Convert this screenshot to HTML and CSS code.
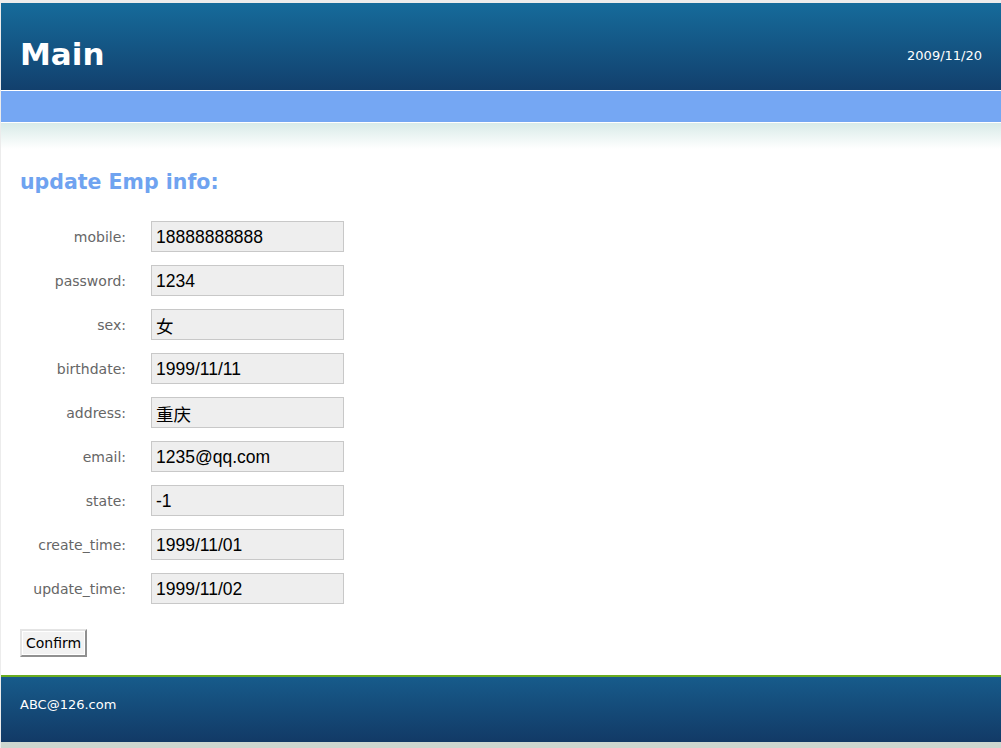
FILE: index.html
```html
<!DOCTYPE html>
<html>
<head>
<meta charset="utf-8">
<title>Main</title>
<link rel="stylesheet" href="styles.css">
</head>
<body>
<div class="page">
  <div class="header">
    <h1 class="logo">Main</h1>
    <div class="date">2009/11/20</div>
  </div>
  <div class="navbar"></div>
  <div class="fade"></div>
  <div class="content">
    <h2 class="title">update Emp info:</h2>
    <form class="form">
      <div class="row"><label class="label">mobile:</label><input class="field" type="text" value="18888888888"></div>
      <div class="row"><label class="label">password:</label><input class="field" type="text" value="1234"></div>
      <div class="row"><label class="label">sex:</label><input class="field" type="text" value="女"></div>
      <div class="row"><label class="label">birthdate:</label><input class="field" type="text" value="1999/11/11"></div>
      <div class="row"><label class="label">address:</label><input class="field" type="text" value="重庆"></div>
      <div class="row"><label class="label">email:</label><input class="field" type="text" value="1235@qq.com"></div>
      <div class="row"><label class="label">state:</label><input class="field" type="text" value="-1"></div>
      <div class="row"><label class="label">create_time:</label><input class="field" type="text" value="1999/11/01"></div>
      <div class="row"><label class="label">update_time:</label><input class="field" type="text" value="1999/11/02"></div>
      <div class="actions"><button class="btn" type="button">Confirm</button></div>
    </form>
  </div>
  <div class="footer">ABC@126.com</div>
</div>
</body>
</html>
```
FILE: styles.css
```css
html, body {
  margin: 0;
  padding: 0;
}
body {
  background: #ececec;
  font-family: "DejaVu Sans", Verdana, sans-serif;
  padding: 3px 0 0 1px;
  height: 745px;
  overflow: hidden;
}
.page {
  background: #fff;
  width: 1000px;
}
.header {
  height: 87px;
  background: linear-gradient(#166b9b, #12406d);
  border-bottom: 1px solid #fff;
  display: flex;
  align-items: center;
  justify-content: space-between;
  padding: 0 19px 0 19px;
  color: #fff;
}
.logo {
  margin: 0;
  font-size: 31px;
  font-weight: bold;
  position: relative;
  top: 7px;
}
.date {
  font-size: 13px;
  position: relative;
  top: 9px;
}
.navbar {
  height: 31px;
  background: #75a7f3;
  border-bottom: 1px solid #fff;
}
.fade {
  height: 26px;
  background: linear-gradient(#d8ebe8, #fff);
}
.content {
  padding: 17px 19px 18px;
}
.title {
  margin: 0 0 23px;
  font-size: 20.5px;
  line-height: 32px;
  color: #6fa3f0;
  font-weight: bold;
}
.form {
  display: flex;
  flex-direction: column;
  gap: 13px;
}
.row {
  display: flex;
  align-items: center;
}
.label {
  width: 106px;
  text-align: right;
  color: #666;
  font-size: 14px;
  margin-right: 25px;
}
.field {
  width: 193px;
  height: 31px;
  box-sizing: border-box;
  margin: 0;
  border: 1px solid #c8c8c8;
  background: #eee;
  padding: 2px 4px 0;
  font-family: "Liberation Sans", Arial, "Noto Sans CJK SC", sans-serif;
  font-size: 17.5px;
  color: #000;
}
.actions {
  padding-top: 12px;
}
.btn {
  margin: 0;
  height: 28px;
  padding: 0 4px;
  font-family: "DejaVu Sans", Tahoma, sans-serif;
  font-size: 14px;
  color: #000;
  background: #f2f2f2;
  border: 2px outset #e4e4e4;
  box-shadow: inset 0 0 0 1px #fff;
}
.footer {
  border-top: 2px solid #6aac1f;
  height: 45px;
  background: linear-gradient(#175b8b, #123a66);
  color: #fff;
  font-size: 13px;
  padding: 20px 19px 0;
  border-bottom: 6px solid #cdd7cf;
}
```
